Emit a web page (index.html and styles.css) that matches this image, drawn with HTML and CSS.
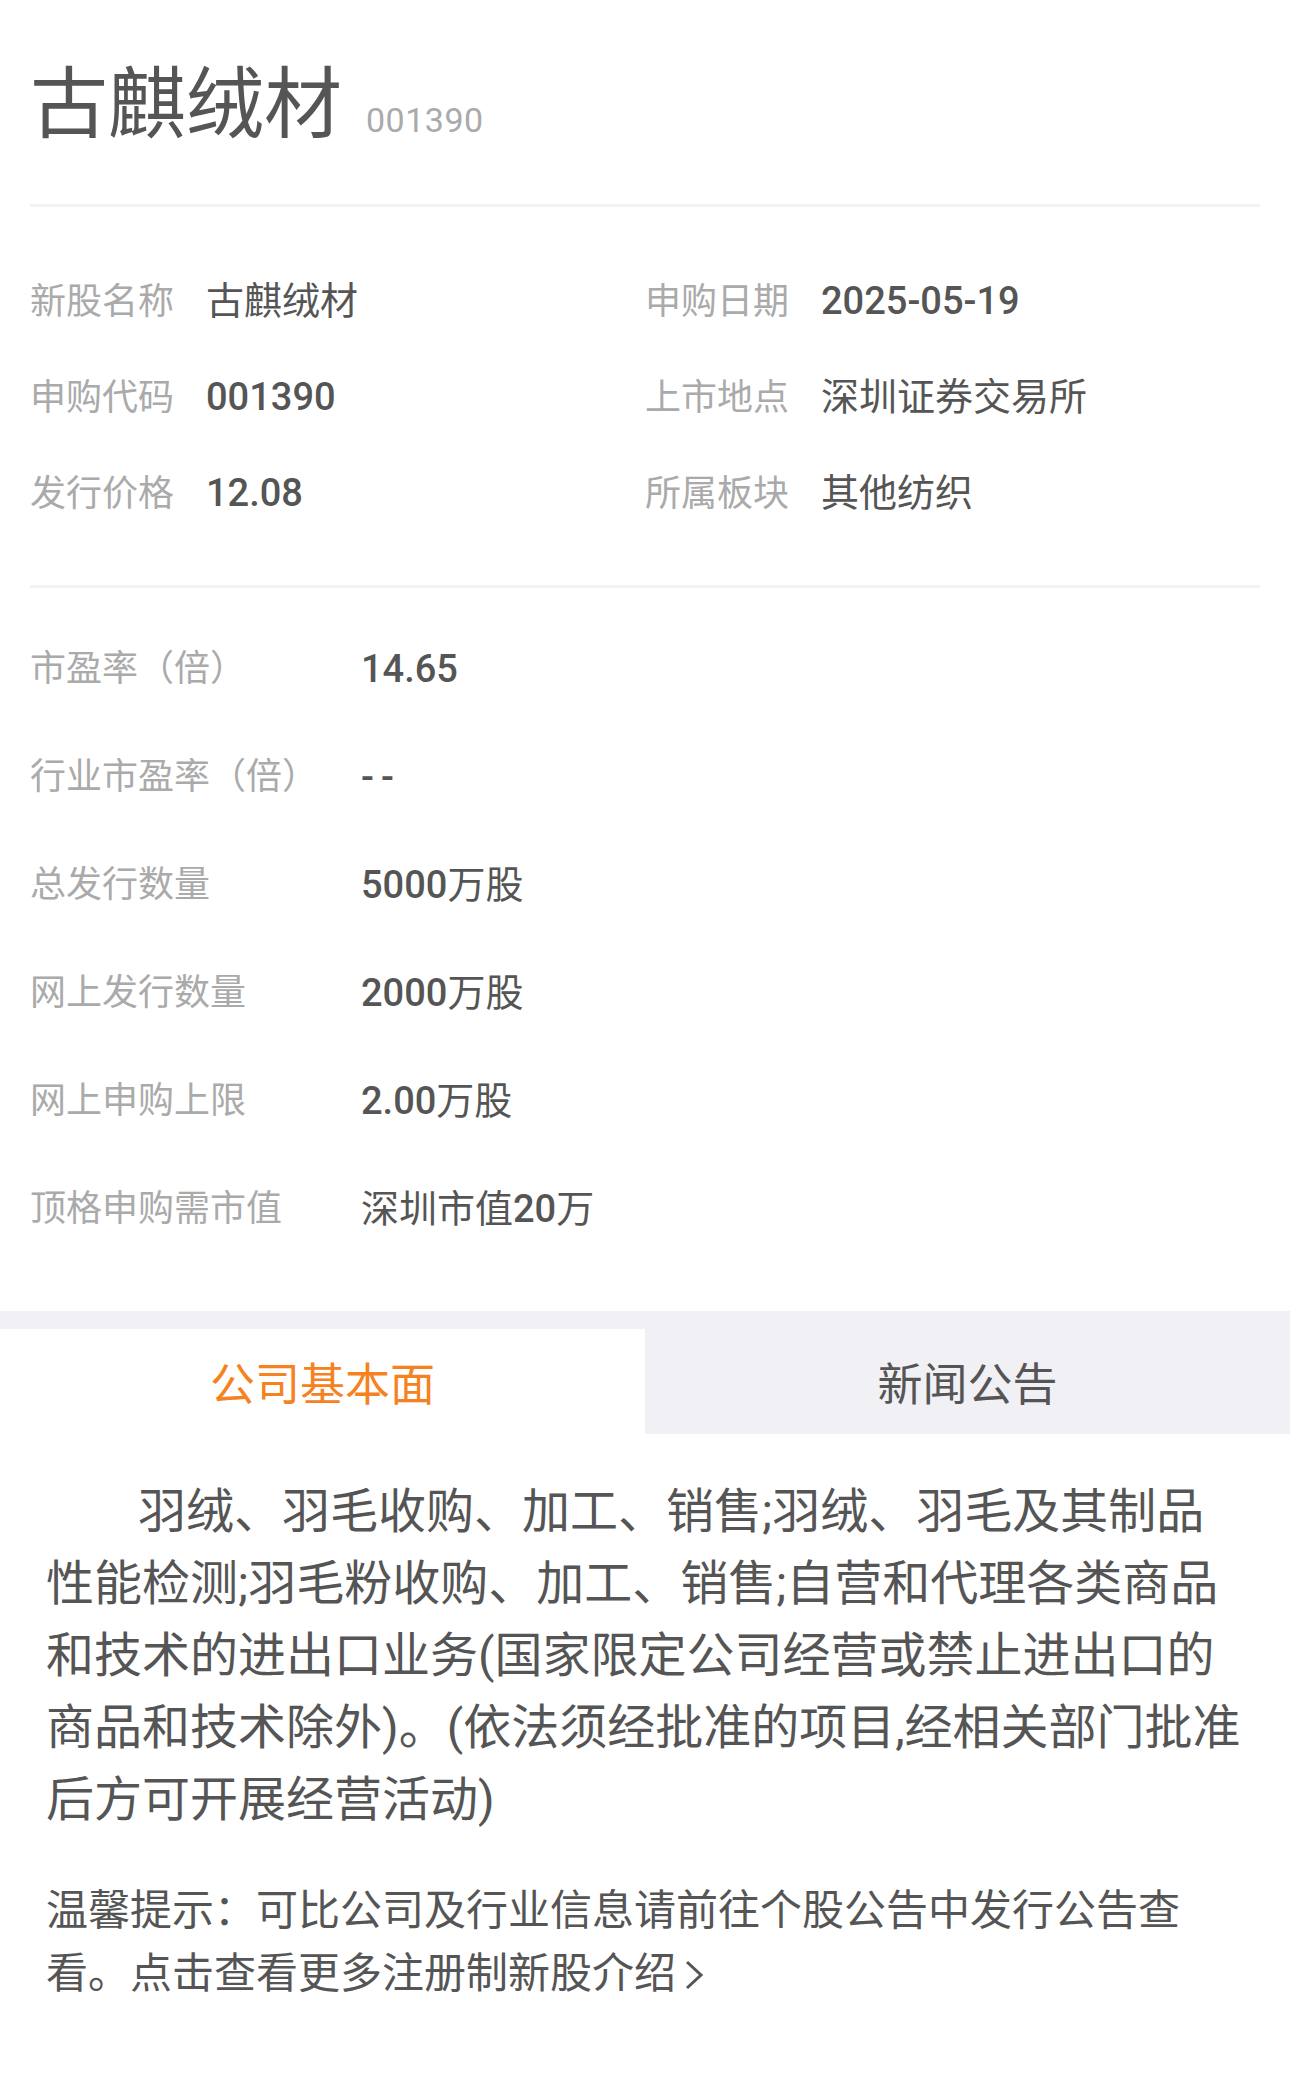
FILE: index.html
```html
<!DOCTYPE html>
<html lang="zh-CN">
    <head>
        <meta charset="UTF-8">
        <meta name="viewport" content="width=device-width, initial-scale=1.0">
        <title>古麒绒材 新股详情</title>
        <link rel="stylesheet" href="styles.css">
    </head>
    <body>
        <div class="page">
            <!-- 标题 -->
            <div class="head">
                <span class="head-name">古麒绒材</span>
                <span class="head-code">001390</span>
            </div>

            <!-- 基本信息 -->
            <div class="info">
                <div class="info-item"><span class="lab">新股名称</span><span class="val">古麒绒材</span></div>
                <div class="info-item"><span class="lab">申购日期</span><span class="val"><b>2025-05-19</b></span></div>
                <div class="info-item"><span class="lab">申购代码</span><span class="val"><b>001390</b></span></div>
                <div class="info-item"><span class="lab">上市地点</span><span class="val">深圳证券交易所</span></div>
                <div class="info-item"><span class="lab">发行价格</span><span class="val"><b>12.08</b></span></div>
                <div class="info-item"><span class="lab">所属板块</span><span class="val">其他纺织</span></div>
            </div>

            <!-- 发行数据 -->
            <div class="detail">
                <div class="detail-row"><span class="lab">市盈率（倍）</span><span class="val"><b>14.65</b></span></div>
                <div class="detail-row"><span class="lab">行业市盈率（倍）</span><span class="val"><b class="dash">--</b></span></div>
                <div class="detail-row"><span class="lab">总发行数量</span><span class="val"><b>5000</b>万股</span></div>
                <div class="detail-row"><span class="lab">网上发行数量</span><span class="val"><b>2000</b>万股</span></div>
                <div class="detail-row"><span class="lab">网上申购上限</span><span class="val"><b>2.00</b>万股</span></div>
                <div class="detail-row"><span class="lab">顶格申购需市值</span><span class="val">深圳市值<b>20</b>万</span></div>
            </div>

            <!-- 切换 -->
            <div class="tabs">
                <a class="tab active" href="javascript:;">公司基本面</a>
                <a class="tab" href="javascript:;">新闻公告</a>
            </div>

            <p class="intro">羽绒、羽毛收购、加工、销售;羽绒、羽毛及其制品性能检测;羽毛粉收购、加工、销售;自营和代理各类商品和技术的进出口业务(国家限定公司经营或禁止进出口的商品和技术除外)。(依法须经批准的项目,经相关部门批准后方可开展经营活动)</p>

            <p class="tip">温馨提示：可比公司及行业信息请前往个股公告中发行公告查看。点击查看更多注册制新股介绍<svg class="arrow" width="20" height="30" viewBox="0 0 20 30"><path d="M3 2 L17 15 L3 28" fill="none" stroke="#555" stroke-width="3"/></svg></p>
        </div>
    </body>
</html>
```

FILE: styles.css
```css
*{
    margin: 0;
    padding: 0;
}
body{
    background: #fff;
    font-family: Roboto, "Noto Sans CJK SC", sans-serif;
    color: #555;
}
.page{
    width: 1290px;
}
b{
    font-weight: 500;
}
.head{
    display: flex;
    align-items: baseline;
    height: 207px;
    box-sizing: border-box;
    padding-top: 67px;
    border-bottom: 3px solid #f2f2f2;
    margin: 0 30px;
}
.head-name{
    font-size: 78px;
    line-height: 78px;
    color: #555;
}
.head-code{
    font-size: 34px;
    color: #aaa;
    margin-left: 24px;
    letter-spacing: 0.5px;
}
.info{
    display: grid;
    grid-template-columns: 1fr 1fr;
    margin: 0 30px;
    padding: 46px 0 44px;
    border-bottom: 3px solid #f2f2f2;
}
.info-item{
    height: 96px;
    line-height: 96px;
    white-space: nowrap;
}
.info .lab{
    font-size: 36px;
    color: #aaa;
    margin-right: 32px;
}
.info .val{
    font-size: 38px;
    color: #555;
}
.detail{
    padding: 27px 30px 48px;
}
.detail-row{
    display: flex;
    height: 108px;
    line-height: 108px;
}
.detail .lab{
    width: 331px;
    font-size: 36px;
    color: #aaa;
}
.detail .val{
    font-size: 38px;
    color: #555;
}
.dash{
    letter-spacing: 7px;
}
.tabs{
    display: flex;
    background: #f0f0f5;
    padding-top: 18px;
}
.tab{
    flex: 1;
    height: 105px;
    box-sizing: border-box;
    padding-top: 8px;
    line-height: 97px;
    text-align: center;
    font-size: 45px;
    color: #555;
    text-decoration: none;
}
.tab.active{
    background: #fff;
    color: #f5821f;
}
.intro{
    padding: 42px 44px 0 46px;
    font-size: 48px;
    line-height: 72px;
    text-indent: 92px;
    color: #555;
}
.tip{
    padding: 43px 80px 0 46px;
    font-size: 42px;
    line-height: 63px;
    color: #555;
}
.arrow{
    margin-left: 8px;
    vertical-align: -2px;
}
```
